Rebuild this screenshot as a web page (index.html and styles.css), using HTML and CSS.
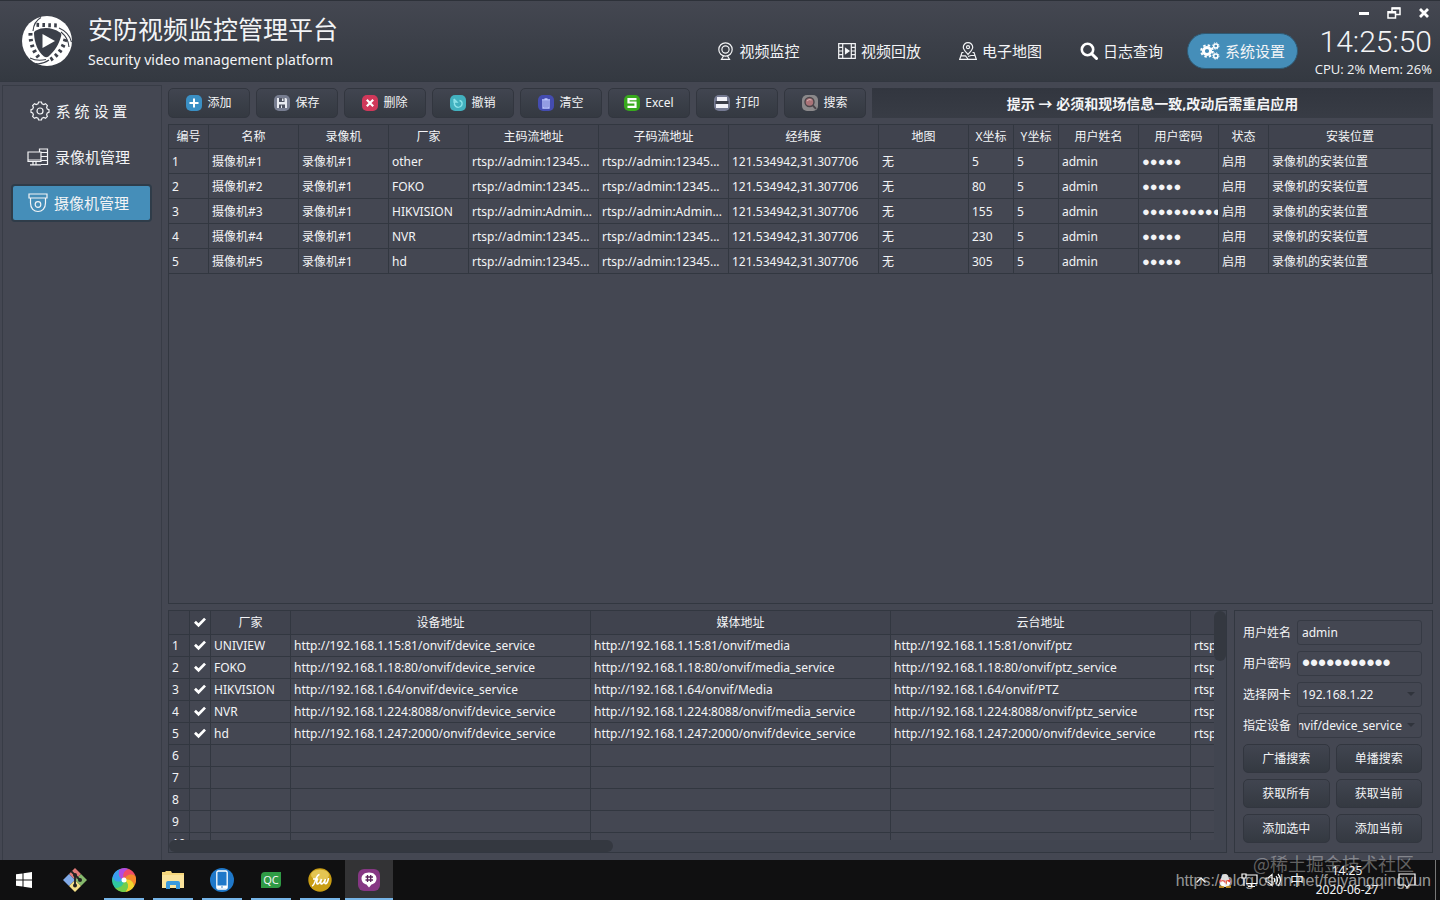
FILE: index.html
```html
<!DOCTYPE html>
<html lang="zh-CN">
<head>
<meta charset="utf-8">
<title>安防视频监控管理平台</title>
<link rel="stylesheet" href="styles.css">
</head>
<body>
<div class="app">
  <header class="header">
    <svg class="logo" viewBox="0 0 50 50" aria-hidden="true">
      <circle cx="25" cy="25" r="25" fill="#fff"/>
      <path d="M14 14.500C21 10.500 31 11.500 38 16.500C39.500 17.500 39.500 19 39 20.500C37 28 33 35 26.500 40.500C25 41.500 23.500 41.500 22 40.500C16 35.500 12.500 27.500 12 17.500C12 16 12.500 15.300 14 14.500Z" fill="#3b3f49"/>
      <path d="M14.500 8.800L38 9.500" fill="none" stroke="#3b3f49" stroke-width="4" stroke-dasharray="2.600 3.300"/>
      <path d="M8.500 17Q8 32 18 43" fill="none" stroke="#3b3f49" stroke-width="4" stroke-dasharray="2.600 3.300"/>
      <path d="M43.500 23Q40 37 28 44" fill="none" stroke="#3b3f49" stroke-width="4" stroke-dasharray="2.600 3.300"/>
      <path d="M11 15C11.500 9 14.500 4 19 1.500M37 12C44 15 48 20 49.500 26M39 16C44 20 46.500 24 47 31M24 43.500C18 45 13 44.500 8 42M27 44C22 47.500 17 48 14 47.500" fill="none" stroke="#3c404a" stroke-width="1.100"/>
      <path d="M20.500 18L33 25L20.500 32Z" fill="#fff"/>
    </svg>
    <div class="brand">
      <h1 class="brand-title">安防视频监控管理平台</h1>
      <p class="brand-sub">Security video management platform</p>
    </div>
    <nav class="nav">
      <button class="nav-item"><svg width="17" height="18" viewBox="0 0 17 18" class="line"><circle cx="8.500" cy="7.500" r="6.700"/><circle cx="8.500" cy="7.500" r="3.600"/><path d="M6.500 14L4.500 17.300H12.500L10.500 14"/></svg>视频监控</button>
      <button class="nav-item"><svg width="18" height="16" viewBox="0 0 18 16" class="line"><path d="M.7.700H17.300V15.300H.7ZM4.700.700V15.300M13.300.700V15.300M.7 4.300H4.700M.7 8H4.700M.7 11.700H4.700M13.300 4.300H17.300M13.300 8H17.300M13.300 11.700H17.300"/><path d="M7.500 5.500L11 8L7.500 10.500Z" fill="#fff"/></svg>视频回放</button>
      <button class="nav-item"><svg width="18" height="18" viewBox="0 0 18 18" class="line"><path d="M9 12.500C6 9 4.300 7.500 4.300 5.200A4.700 4.500 0 0 1 13.700 5.200C13.700 7.500 12 9 9 12.500Z"/><circle cx="9" cy="5.200" r="1.500"/><path d="M4.500 10.500H3L.7 17.300H17.300L15 10.500H13.500M2 13.800H6.500L9 17M9 14.500L12 13.500H16"/></svg>电子地图</button>
      <button class="nav-item"><svg width="18" height="18" viewBox="0 0 18 18"><circle cx="7.500" cy="7.500" r="5.700" fill="none" stroke="#fff" stroke-width="2.600"/><path d="M11.700 11.700L16.500 16.500" stroke="#fff" stroke-width="3" stroke-linecap="round"/></svg>日志查询</button>
      <button class="nav-item is-active"><svg width="20" height="18" viewBox="0 0 20 18" fill="none" stroke="#fff"><circle cx="7" cy="9" r="3.600" stroke-width="3"/><circle cx="7" cy="9" r="5.800" stroke-width="2" stroke-dasharray="2.400 2.155"/><circle cx="15.800" cy="4" r="2.100" stroke-width="1.500"/><circle cx="15.800" cy="4" r="3.200" stroke-dasharray="1.300 1.213"/><circle cx="15.800" cy="14" r="2.100" stroke-width="1.500"/><circle cx="15.800" cy="14" r="3.200" stroke-dasharray="1.300 1.213"/></svg>系统设置</button>
    </nav>
    <div class="status">
      <div class="window-controls">
        <button aria-label="最小化"><svg width="12" height="12" viewBox="0 0 12 12"><path d="M1 5H11V8H1Z" fill="#fff"/></svg></button>
        <button aria-label="还原"><svg width="14" height="12" viewBox="0 0 14 12" fill="none" stroke="#fff" stroke-width="1.500"><path d="M5 4V1H13V7.500H9M1 4.800H8.500V11H1Z"/><path d="M1 5.500H8.500M5 1.500H13" stroke-width="2"/></svg></button>
        <button aria-label="关闭"><svg width="12" height="12" viewBox="0 0 12 12"><path d="M2 2L10 10M10 2L2 10" stroke="#fff" stroke-width="2.800"/></svg></button>
      </div>
      <time class="clock">14:25:50</time>
      <span class="load">CPU: 2% Mem: 26%</span>
    </div>
  </header>

  <div class="body">
    <nav class="sidebar">
      <button class="side-item"><svg width="20" height="20" viewBox="0 0 20 20" class="line"><path d="M8 2.800L8.600 1H11.400L12 2.800L13.800 3.500L15.500 2.700L17.400 4.600L16.600 6.300L17.300 8L19 8.600V11.400L17.300 12L16.600 13.700L17.400 15.400L15.500 17.300L13.800 16.500L12 17.200L11.400 19H8.600L8 17.200L6.200 16.500L4.500 17.300L2.600 15.400L3.400 13.700L2.700 12L1 11.400V8.600L2.700 8L3.400 6.300L2.600 4.600L4.500 2.700L6.200 3.500Z"/><circle cx="10" cy="10" r="3"/></svg>系 统 设 置</button>
      <button class="side-item"><svg width="22" height="18" viewBox="0 0 22 18" class="line"><path d="M1 4H14V13.500H1ZM12.500 4V1H20.500V16.500H14M14 4.500H20.500M14 8.500H20.500M14 12.500H20.500M6 13.500V16.500M9 13.500V16.500M3 16.800H14M1 12H14"/></svg>录像机管理</button>
      <button class="side-item is-active"><svg width="20" height="20" viewBox="0 0 20 20" class="line"><path d="M1 1H19V5H1ZM2.500 5V10C2.500 15.500 6 18.500 10 18.500S17.500 15.500 17.500 10V5"/><circle cx="10" cy="11.500" r="2.800"/></svg>摄像机管理</button>
    </nav>

    <main class="main">
      <div class="toolbar">
        <button class="btn tool"><svg class="ti" viewBox="0 0 16 16"><rect width="16" height="16" rx="5" fill="#3a8fc4"/><path d="M8 3.500V12.500M3.500 8H12.500" stroke="#fff" stroke-width="2"/></svg>添加</button>
        <button class="btn tool"><svg class="ti" viewBox="0 0 16 16"><rect width="16" height="16" rx="5" fill="#777d90"/><path d="M3 3H12L13 4V13H3Z" fill="#e9ebf0"/><path d="M5 3H10.500V7H5ZM5 9.500H11V13H5Z" fill="#4d5261"/><path d="M8 3.500H9.500V6H8ZM7 10.500H8V13H7Z" fill="#e9ebf0"/></svg>保存</button>
        <button class="btn tool"><svg class="ti" viewBox="0 0 16 16"><rect width="16" height="16" rx="5" fill="#d0385a"/><path d="M4.800 4.800L11.200 11.200M11.200 4.800L4.800 11.200" stroke="#fff" stroke-width="2.200"/></svg>删除</button>
        <button class="btn tool"><svg class="ti" viewBox="0 0 16 16"><rect width="16" height="16" rx="5" fill="#42b1bf"/><path d="M4 4L7 7H4.500C3.500 11 7 13 9.500 12C13 11 13 6 9.500 5.500M4 4V7H7" fill="none" stroke="#8be2e8" stroke-width="1.300"/></svg>撤销</button>
        <button class="btn tool"><svg class="ti" viewBox="0 0 16 16"><rect width="16" height="16" rx="5" fill="#444cb0"/><path d="M4 5H12M6.500 4H9.500M5 6V13H11V6M7 6V12M9 6V12" fill="none" stroke="#bfc8ff" stroke-width="1.300"/></svg>清空</button>
        <button class="btn tool"><svg class="ti" viewBox="0 0 16 16"><rect width="16" height="16" rx="5" fill="#38a91d"/><path d="M12.500 4.200H4.500V7.500H11.500V11.800H3.500" fill="none" stroke="#fff" stroke-width="2.200"/></svg>Excel</button>
        <button class="btn tool"><svg class="ti" viewBox="0 0 16 16"><rect width="16" height="16" rx="5" fill="#747991"/><path d="M3 2H13V6H3ZM2 9H14V13H2Z" fill="#f1f1f8"/><path d="M1.500 6H14.500V9H1.500Z" fill="#3a3d48"/></svg>打印</button>
        <button class="btn tool"><svg class="ti" viewBox="0 0 16 16"><rect width="16" height="16" rx="5" fill="#8b898b"/><circle cx="7.500" cy="7" r="4.500" fill="#aa7378" stroke="#4b454a" stroke-width="1.400"/><path d="M10.800 10.300L14 13.800" stroke="#4b454a" stroke-width="2"/><path d="M5 6Q7 3.500 9.500 5" stroke="#d9b3b4" fill="none"/></svg>搜索</button>
        <div class="tip">提示 → 必须和现场信息一致,改动后需重启应用</div>
      </div>

      <section class="frame camera-frame">
        <table class="grid cameras">
          <colgroup><col class="w40"><col class="w90"><col class="w90"><col class="w80"><col class="w130"><col class="w130"><col class="w150"><col class="w90"><col class="w45"><col class="w45"><col class="w80"><col class="w80"><col class="w50"><col></colgroup>
          <thead><tr><th>编号</th><th>名称</th><th>录像机</th><th>厂家</th><th>主码流地址</th><th>子码流地址</th><th>经纬度</th><th>地图</th><th>X坐标</th><th>Y坐标</th><th>用户姓名</th><th>用户密码</th><th>状态</th><th>安装位置</th></tr></thead>
          <tbody>
            <tr><td>1</td><td>摄像机#1</td><td>录像机#1</td><td>other</td><td>rtsp://admin:12345...</td><td>rtsp://admin:12345...</td><td>121.534942,31.307706</td><td>无</td><td>5</td><td>5</td><td>admin</td><td class="secret">●●●●●</td><td>启用</td><td>录像机的安装位置</td></tr>
            <tr><td>2</td><td>摄像机#2</td><td>录像机#1</td><td>FOKO</td><td>rtsp://admin:12345...</td><td>rtsp://admin:12345...</td><td>121.534942,31.307706</td><td>无</td><td>80</td><td>5</td><td>admin</td><td class="secret">●●●●●</td><td>启用</td><td>录像机的安装位置</td></tr>
            <tr><td>3</td><td>摄像机#3</td><td>录像机#1</td><td>HIKVISION</td><td>rtsp://admin:Admin...</td><td>rtsp://admin:Admin...</td><td>121.534942,31.307706</td><td>无</td><td>155</td><td>5</td><td>admin</td><td class="secret">●●●●●●●●●●</td><td>启用</td><td>录像机的安装位置</td></tr>
            <tr><td>4</td><td>摄像机#4</td><td>录像机#1</td><td>NVR</td><td>rtsp://admin:12345...</td><td>rtsp://admin:12345...</td><td>121.534942,31.307706</td><td>无</td><td>230</td><td>5</td><td>admin</td><td class="secret">●●●●●</td><td>启用</td><td>录像机的安装位置</td></tr>
            <tr><td>5</td><td>摄像机#5</td><td>录像机#1</td><td>hd</td><td>rtsp://admin:12345...</td><td>rtsp://admin:12345...</td><td>121.534942,31.307706</td><td>无</td><td>305</td><td>5</td><td>admin</td><td class="secret">●●●●●</td><td>启用</td><td>录像机的安装位置</td></tr>
          </tbody>
        </table>
      </section>

      <div class="lower">
        <section class="frame device-frame">
          <div class="viewport">
            <table class="grid devices">
              <colgroup><col class="w21"><col class="w21"><col class="w80"><col class="w300"><col class="w300"><col class="w300"><col class="w300"></colgroup>
              <thead><tr><th></th><th><input type="checkbox" class="check" aria-label="全选" checked></th><th>厂家</th><th>设备地址</th><th>媒体地址</th><th>云台地址</th><th></th></tr></thead>
              <tbody>
                <tr><td>1</td><td><input type="checkbox" class="check" aria-label="UNIVIEW" checked></td><td>UNIVIEW</td><td>http://192.168.1.15:81/onvif/device_service</td><td>http://192.168.1.15:81/onvif/media</td><td>http://192.168.1.15:81/onvif/ptz</td><td>rtsp</td></tr>
                <tr><td>2</td><td><input type="checkbox" class="check" aria-label="FOKO" checked></td><td>FOKO</td><td>http://192.168.1.18:80/onvif/device_service</td><td>http://192.168.1.18:80/onvif/media_service</td><td>http://192.168.1.18:80/onvif/ptz_service</td><td>rtsp</td></tr>
                <tr><td>3</td><td><input type="checkbox" class="check" aria-label="HIKVISION" checked></td><td>HIKVISION</td><td>http://192.168.1.64/onvif/device_service</td><td>http://192.168.1.64/onvif/Media</td><td>http://192.168.1.64/onvif/PTZ</td><td>rtsp</td></tr>
                <tr><td>4</td><td><input type="checkbox" class="check" aria-label="NVR" checked></td><td>NVR</td><td>http://192.168.1.224:8088/onvif/device_service</td><td>http://192.168.1.224:8088/onvif/media_service</td><td>http://192.168.1.224:8088/onvif/ptz_service</td><td>rtsp</td></tr>
                <tr><td>5</td><td><input type="checkbox" class="check" aria-label="hd" checked></td><td>hd</td><td>http://192.168.1.247:2000/onvif/device_service</td><td>http://192.168.1.247:2000/onvif/device_service</td><td>http://192.168.1.247:2000/onvif/device_service</td><td>rtsp</td></tr>
                <tr><td>6</td><td></td><td></td><td></td><td></td><td></td><td></td></tr>
                <tr><td>7</td><td></td><td></td><td></td><td></td><td></td><td></td></tr>
                <tr><td>8</td><td></td><td></td><td></td><td></td><td></td><td></td></tr>
                <tr><td>9</td><td></td><td></td><td></td><td></td><td></td><td></td></tr>
                <tr><td>10</td><td></td><td></td><td></td><td></td><td></td><td></td></tr>
              </tbody>
            </table>
          </div>
          <div class="vbar"><div class="vthumb"></div></div>
          <div class="hbar"><div class="hthumb"></div></div>
        </section>

        <form class="frame form">
          <label for="user">用户姓名</label>
          <input class="field" id="user" type="text" value="admin">
          <label for="pwd">用户密码</label>
          <input class="field pwd" id="pwd" type="password" value="admin123456">
          <label for="card">选择网卡</label>
          <div class="combo"><select class="field" id="card"><option>192.168.1.22</option></select></div>
          <label for="device">指定设备</label>
          <div class="combo"><input class="field tail" id="device" type="text" dir="rtl" value="http://192.168.1.15:81/onvif/device_service"></div>
          <div class="actions">
            <button type="button" class="btn">广播搜索</button><button type="button" class="btn">单播搜索</button>
            <button type="button" class="btn">获取所有</button><button type="button" class="btn">获取当前</button>
            <button type="button" class="btn">添加选中</button><button type="button" class="btn">添加当前</button>
          </div>
        </form>
      </div>
    </main>
  </div>
</div>

<footer class="taskbar">
  <button class="task start" aria-label="开始"><svg width="16" height="16" viewBox="0 0 16 16" fill="#fff"><path d="M0 2.300L6.500 1.400V7.500H0ZM7.500 1.200L16 0V7.500H7.500ZM0 8.500H6.500V14.600L0 13.700ZM7.500 8.500H16V16L7.500 14.800Z"/></svg></button>
  <button class="task" aria-label="Git"><svg width="26" height="26" viewBox="0 0 26 26"><path d="M13 1L19 7L13 13L7 7Z" fill="#e07a78"/><path d="M7 7L13 13L7 19L1 13Z" fill="#81aae8"/><path d="M19 7L25 13L19 19L13 13Z" fill="#86b96c"/><path d="M13 13L19 19L13 25L7 19Z" fill="#f4df88"/><path d="M9 4L13 8V19M13 8L18 13" stroke="#222" stroke-width="1.800" fill="none"/><circle cx="13" cy="8" r="2" fill="#222"/><circle cx="18" cy="13" r="2" fill="#222"/><circle cx="13" cy="18.500" r="2" fill="#222"/></svg></button>
  <button class="task is-open" aria-label="浏览器"><svg width="24" height="24" viewBox="0 0 24 24"><circle cx="12" cy="12" r="11.500" fill="#5cc96b"/><path d="M12 12C7 11 5 5 8 1A12 12 0 0 1 17 1C12 3 10 7 12 12Z" fill="#b34be0"/><path d="M12 12C10 7 12 2 17 1A12 12 0 0 1 23.500 8C19 5.500 14 7 12 12Z" fill="#f34b67"/><path d="M12 12C14 7 19 5 23.500 8A12 12 0 0 1 22 18.500C21 13 17 10.500 12 12Z" fill="#f7882b"/><path d="M12 12C17 10 22 13 22 18.500A12 12 0 0 1 13 24C17 20 17 15 12 12Z" fill="#f4d42d"/><path d="M12 12C17 15 17 20 13 24A12 12 0 0 1 3 20C9 20 12 17 12 12Z" fill="#72ce4b"/><path d="M12 12C12 17 8 20 3 20A12 12 0 0 1 .5 9C3 14 7 15 12 12Z" fill="#2fc7a0"/><path d="M12 12C7 15 2 14 .5 9A12 12 0 0 1 8 1C5 6 7 11 12 12Z" fill="#3a9df0"/><circle cx="12" cy="12" r="2.500" fill="#fff"/></svg></button>
  <button class="task is-open" aria-label="文件资源管理器"><svg width="22" height="20" viewBox="0 0 22 20"><path d="M0 2H3L4 1H9L10 3H22V18H0Z" fill="#f6d77c"/><path d="M0 5H22V18H0Z" fill="#fbe49c"/><path d="M4 19V13Q4 11 6 11H16Q18 11 18 13V19H14V15H8V19Z" fill="#3a9ade"/></svg></button>
  <button class="task is-open" aria-label="手机助手"><svg width="24" height="24" viewBox="0 0 24 24"><circle cx="12" cy="12" r="12" fill="#1f78c9"/><rect x="6.800" y="3" width="10.400" height="18" rx="1.500" fill="#1f78c9" stroke="#fff" stroke-width="1.300"/><path d="M7 17.500H17V20.500H7Z" fill="#fff"/><circle cx="12" cy="19" r=".8" fill="#1f78c9"/></svg></button>
  <button class="task is-open" aria-label="Qt Creator"><span class="qc">QC</span></button>
  <button class="task is-open" aria-label="编辑器"><svg width="24" height="24" viewBox="0 0 24 24"><circle cx="12" cy="12" r="11.700" fill="#c99d13"/><ellipse cx="12" cy="7" rx="9" ry="5.500" fill="#e4c553"/><path d="M4 18C8 17 7 7 11.500 6.500M5 11H10M9.500 11C7 18 11 17 13.500 11C11 18 15 17 17.500 11C15 17 19 18 20.500 10" fill="none" stroke="#fff" stroke-width="1.600"/></svg></button>
  <button class="task is-open is-current" aria-label="安防平台"><svg width="22" height="22" viewBox="0 0 22 22"><rect width="22" height="22" rx="6" fill="#863784"/><path d="M11 3.500C16 3.500 18.500 6.500 18.500 9.500C18.500 13 16 15 13.500 15.500L11 18.500L8.500 15.500C6 15 3.500 13 3.500 9.500C3.500 6.500 6 3.500 11 3.500Z" fill="#fff"/><path d="M9.500 6V13M12.700 6V13M7.500 8H15M7.500 11H15" stroke="#5b255b" stroke-width="1.300"/></svg></button>
  <div class="tray">
    <button aria-label="展开"><svg width="12" height="12" viewBox="0 0 12 12"><path d="M1.500 8.500L6 4L10.500 8.500" fill="none" stroke="#fff" stroke-width="1.300"/></svg></button>
    <button aria-label="QQ"><svg width="14" height="15" viewBox="0 0 14 15"><ellipse cx="7" cy="9" rx="5.500" ry="5" fill="#fff"/><circle cx="7" cy="4.500" r="3.500" fill="#ddd"/><path d="M2 6Q7 9 12 6L13 10L9 8V12L5 8L1 10Z" fill="#e5392d"/><path d="M1 14H6M8 14H13" stroke="#e7a928" stroke-width="1.500"/></svg></button>
    <button aria-label="网络"><svg width="17" height="15" viewBox="0 0 17 15" fill="none" stroke="#fff" stroke-width="1.200"><path d="M5 2H16V10.500H5M10.500 10.500V13.500M7 13.500H14M1 1H5V5H1ZM3 5V13"/></svg></button>
    <button aria-label="音量"><svg width="17" height="14" viewBox="0 0 17 14" fill="none" stroke="#fff" stroke-width="1.200"><path d="M1 5H3L7 1.500V12.500L3 9H1ZM9 5Q10.500 7 9 9M11 3Q14 7 11 11M13 1Q18 7 13 13"/></svg></button>
    <button class="ime">中</button>
    <div class="task-clock"><span>14:25</span><span>2020-06-27</span></div>
    <button class="notice" aria-label="通知"><svg width="18" height="17" viewBox="0 0 18 17"><path d="M1 2H17V13H11L9 15.500L7 13H1Z" fill="none" stroke="#fff" stroke-width="1.200"/></svg></button>
  </div>
  <span class="mark-top">@稀土掘金技术社区</span>
  <span class="mark-url">https://blog.csdn.net/feiyangqingyun</span>
</footer>
</body>
</html>
```
FILE: styles.css
```css
:root {
  --bg: #444752;
  --line: #323740;
  --dark: #343840;
  --accent: #458eb9;
  --text: #f3f4f6;
}
* { box-sizing: border-box; }
body {
  margin: 0;
  min-height: 100vh;
  display: flex;
  flex-direction: column;
  background: var(--bg);
  color: var(--text);
  font: 12px/16px "Noto Sans", "Noto Sans CJK SC", sans-serif;
}
button, input, select { font: inherit; color: inherit; margin: 0; }
button { border: 0; padding: 0; background: none; cursor: pointer; white-space: nowrap; }
svg { flex: none; display: block; }
.line { fill: none; stroke: #f3f4f6; stroke-width: 1.2px; }

.app { flex: 1; display: flex; flex-direction: column; }
.header {
  display: flex;
  height: 82px;
  border-top: 1px solid #2d3139;
  border-bottom: 1px solid var(--line);
  background: linear-gradient(#444751, #343941);
}
.logo { width: 50px; height: 50px; margin: 15px 0 0 22px; }
.brand { margin: 11px 0 0 16px; white-space: nowrap; }
.brand-title { margin: 0; font-size: 25px; line-height: 34px; font-weight: 400; }
.brand-sub { margin: 4px 0 0; font-size: 14px; line-height: 20px; }
.nav { display: flex; gap: 10px; margin: 32px 0 0 auto; }
.nav-item {
  display: flex;
  align-items: center;
  justify-content: center;
  gap: 5px;
  width: 111px;
  height: 36px;
  border-radius: 18px;
  font-size: 15px;
}
.nav-item.is-active { background: var(--accent); border: 1px solid #2f5a74; }
.status { display: flex; flex-direction: column; align-items: flex-end; width: 142px; padding-right: 8px; }
.window-controls { display: flex; margin-right: -7px; }
.window-controls button { width: 30px; height: 24px; display: grid; place-items: center; }
.clock { font: 300 30px/34px Roboto, "Open Sans", sans-serif; }
.load { font: 13px/20px "Open Sans", sans-serif; white-space: nowrap; }

.body { flex: 1; display: flex; padding-top: 3px; }
.sidebar {
  display: flex;
  flex-direction: column;
  gap: 8px;
  width: 160px;
  margin-left: 2px;
  padding: 6px 9px 6px 8px;
  border: 1px solid #383c46;
  border-bottom: 0;
}
.side-item {
  display: flex;
  align-items: center;
  justify-content: center;
  gap: 6px;
  height: 38px;
  padding-right: 6px;
  border: 2px solid transparent;
  border-radius: 4px;
  font-size: 15px;
}
.side-item.is-active { background: var(--accent); border-color: #2f3c49; }
.main { flex: 1; min-width: 0; display: flex; flex-direction: column; gap: 6px; padding: 3px 7px 7px 6px; }
.btn {
  height: 30px;
  border: 1px solid #32363f;
  border-radius: 5px;
  background: linear-gradient(#414550, #343941);
}
.toolbar { display: flex; gap: 6px; }
.tool { display: flex; align-items: center; justify-content: center; gap: 5px; width: 82px; }
.ti { width: 16px; height: 16px; }
.tip {
  flex: 1;
  background: linear-gradient(#32363f, #383c45);
  text-align: center;
  font-size: 14px;
  line-height: 32px;
  height: 30px;
  font-weight: 700;
  white-space: nowrap;
}
.frame { border: 1px solid var(--line); }
.camera-frame { flex: 1; overflow: hidden; }
.grid { table-layout: fixed; border-collapse: separate; border-spacing: 0; width: 100%; }
.grid th, .grid td {
  padding: 0 3px;
  border-right: 1px solid var(--line);
  border-bottom: 1px solid var(--line);
  height: 25px;
  white-space: nowrap;
  overflow: hidden;
  font-weight: 400;
  text-align: left;
}
.grid th { height: 24px; text-align: center; background: #40434e; }
.grid th { padding: 0; }
.cameras td { padding-top: 2px; }
.devices { width: 1322px; }
.devices td { height: 22px; }
.devices td:first-child { background: #40434e; }
.cameras .secret { font-family: "Liberation Sans", sans-serif; font-size: 13px; padding-right: 0; }
.w21 { width: 21px; }
.w40 { width: 40px; }
.w45 { width: 45px; }
.w50 { width: 50px; }
.w80 { width: 80px; }
.w90 { width: 90px; }
.w130 { width: 130px; }
.w150 { width: 150px; }
.w300 { width: 300px; }
.check { appearance: none; display: block; width: 12px; height: 12px; }
.grid .check { margin: 0 auto; }
.check:checked {
  background: #fff;
  clip-path: polygon(0 52%, 16% 36%, 38% 56%, 84% 10%, 100% 26%, 38% 90%);
}

.lower { display: flex; gap: 7px; }
.device-frame { flex: 1; min-width: 0; display: grid; grid-template: 229px 12px / minmax(0, 1fr) 12px; }
.viewport { overflow: hidden; }
.vbar, .hbar { background: #414550; }
.hbar { grid-column: 1 / -1; }
.vthumb { height: 50px; border-radius: 6px; background: var(--dark); }
.hthumb { width: 42%; height: 12px; border-radius: 6px; background: var(--dark); }
.form {
  display: grid;
  grid-template-columns: 48px 1fr;
  gap: 6px;
  width: 199px;
  padding: 9px 10px 9px 8px;
  align-items: center;
  align-content: start;
}
.field {
  display: block;
  width: 100%;
  height: 25px;
  padding: 0 4px;
  border: 1px solid #363a44;
  border-radius: 3px;
  background: transparent;
  appearance: none;
  outline: 0;
}
.pwd { font-family: "Liberation Sans", sans-serif; font-size: 23px; }
.combo { position: relative; }
.combo::after {
  content: "";
  position: absolute;
  right: 7px;
  top: 10px;
  border: 4px solid transparent;
  border-top-color: #30343c;
  border-bottom: 0;
}
.tail { padding: 0 19px 0 1px; }
.actions { grid-column: 1 / -1; display: grid; grid-template-columns: 1fr 1fr; gap: 6px; }
.actions .btn { height: 29px; }

.taskbar { position: relative; display: flex; height: 40px; gap: 1px; background: #101011; }
.task { width: 48px; display: grid; place-items: center; position: relative; }
.start { margin-right: 2px; }
.is-open::after {
  content: "";
  position: absolute;
  left: 4px;
  right: 4px;
  bottom: 0;
  height: 2px;
  background: #76b5e8;
}
.is-current { background: #333335; }
.is-current::after { left: 0; right: 0; }
.qc {
  width: 20px;
  background: #2f9b45;
  border-radius: 4px 0 4px 0;
  font-size: 11px;
  line-height: 16px;
}
.tray { display: flex; align-items: center; margin-left: auto; margin-right: 4px; border-right: 1px solid #777; }
.tray button { width: 24px; display: grid; place-items: center; }
.tray .ime { font-size: 14px; }
.task-clock { display: flex; flex-direction: column; align-items: center; width: 76px; line-height: 19px; }
.tray .notice { width: 50px; padding-right: 6px; }
.mark-top {
  position: absolute;
  right: 26px;
  top: -9px;
  color: rgba(255, 255, 255, .35);
  font: 18px/24px "Noto Sans CJK SC", sans-serif;
  white-space: nowrap;
}
.mark-url {
  position: absolute;
  right: 9px;
  top: 11px;
  color: rgba(225, 225, 225, .65);
  font: 16px/20px "Liberation Sans", sans-serif;
  white-space: nowrap;
}
```
